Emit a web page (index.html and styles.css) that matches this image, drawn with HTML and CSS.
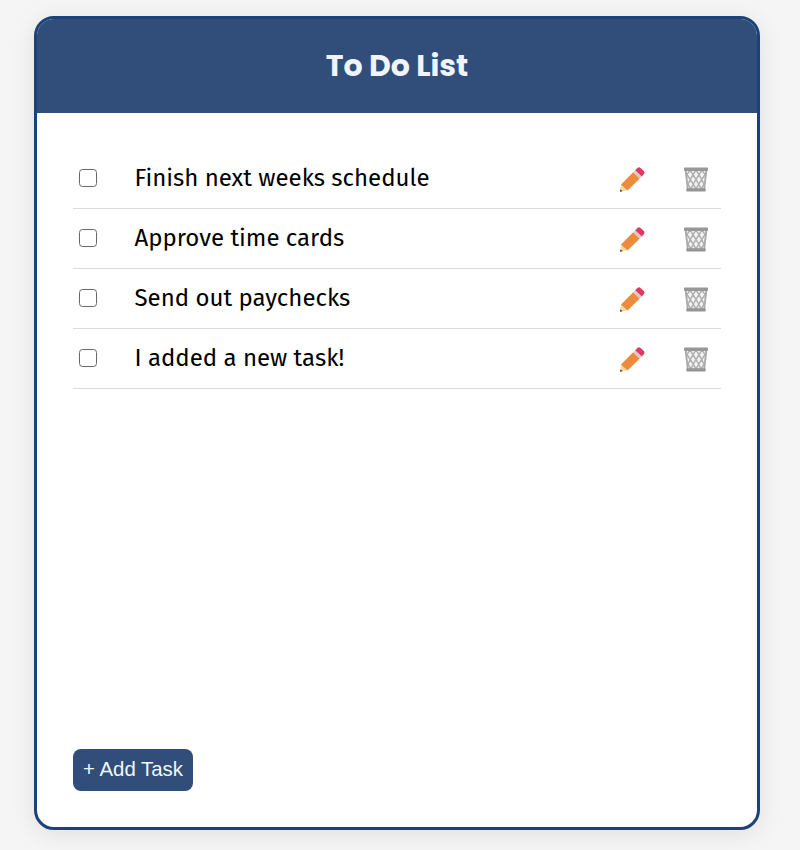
FILE: index.html
```html
<!DOCTYPE html>
<html lang="en">
<head>
<meta charset="utf-8">
<title>To Do List</title>
<link rel="stylesheet" href="styles.css">
</head>
<body>
<svg width="0" height="0" class="defs" aria-hidden="true">
  <symbol id="pencil" viewBox="0 0 28 28">
    <path d="M2 26.8 3.3 19.2 9.3 25.2Z" fill="#f8d79b"/>
    <path d="M2 26.8 2.5 24.3 4.5 26.2Z" fill="#39383b"/>
    <path d="M3 19.4 15.2 7.2 21.8 13.4 9.5 25.4Z" fill="#ed8a3c"/>
    <path d="M15.2 7.2 17.2 5.2 23.8 11.4 21.8 13.4Z" fill="#dcc9cf"/>
    <path d="M17.2 5.2 19.6 2.8Q21.1 1.6 22.6 3L25.9 6Q27.2 7.5 26 9L23.8 11.4Z" fill="#de3b64"/>
  </symbol>
  <symbol id="trash" viewBox="0 0 28 28">
    <path d="M3.5 5H24.5L22.2 24H5.8Z" fill="#f4f4f4"/>
    <path d="M3.6 5 5.8 24M24.4 5 22.2 24" stroke="#a9a9a9" stroke-width="1.9" fill="none"/>
    <path d="M8 5 11 9.7 8.3 14.5 11.2 19.2 9 24M8 5 5 9.7 8.3 14.5 6 19.2 9 24M14 5 11 9.7 14 14.5 11.2 19.2 14 24M14 5 17 9.7 14 14.5 16.8 19.2 14 24M20 5 17 9.7 19.7 14.5 16.8 19.2 19 24M20 5 23 9.7 19.7 14.5 22 19.2 19 24" stroke="#b0b0b0" stroke-width="1.5" fill="none"/>
    <rect x="2" y="2.6" width="24" height="3.3" rx=".8" fill="#989898"/>
    <rect x="4.3" y="23.2" width="19.4" height="3.4" rx=".8" fill="#949494"/>
  </symbol>
</svg>
<main class="card">
  <header class="header"><h1>To Do List</h1></header>
  <div class="content">
    <ul class="tasks">
      <li class="task"><span class="check" role="checkbox" aria-checked="false"></span><span class="label">Finish next weeks schedule</span><svg class="icon"><use href="#pencil"/></svg><svg class="icon"><use href="#trash"/></svg></li>
      <li class="task"><span class="check" role="checkbox" aria-checked="false"></span><span class="label">Approve time cards</span><svg class="icon"><use href="#pencil"/></svg><svg class="icon"><use href="#trash"/></svg></li>
      <li class="task"><span class="check" role="checkbox" aria-checked="false"></span><span class="label">Send out paychecks</span><svg class="icon"><use href="#pencil"/></svg><svg class="icon"><use href="#trash"/></svg></li>
      <li class="task"><span class="check" role="checkbox" aria-checked="false"></span><span class="label">I added a new task!</span><svg class="icon"><use href="#pencil"/></svg><svg class="icon"><use href="#trash"/></svg></li>
    </ul>
    <button class="add">+ Add Task</button>
  </div>
</main>
</body>
</html>
```
FILE: styles.css
```css
* { box-sizing: border-box; }
body { margin: 0; height: 850px; padding: 16px 40px 20px 34px; background: #f5f5f5; overflow: hidden; }
.defs { display: none; }
.card { display: flex; flex-direction: column; height: 814px; border: 3px solid #1b4279; border-radius: 20px; background: #fff; box-shadow: 0 4px 24px rgba(0, 0, 0, .09); overflow: hidden; }
.header { flex: none; height: 94px; display: flex; align-items: center; justify-content: center; background: #304e79; }
h1 { margin: 0; font: 700 30px/40px Poppins, Inter, sans-serif; color: #f0f4ff; }
.content { flex: 1; display: flex; flex-direction: column; align-items: stretch; justify-content: space-between; padding: 36px; }
.tasks { list-style: none; margin: 0; padding: 0; }
.task { display: flex; align-items: center; height: 60px; padding: 0 11.5px 2px 6px; border-bottom: 1px solid #dcdcdc; }
.check { width: 18px; height: 18px; border: 1.5px solid #686868; border-radius: 3.5px; margin-right: 37.5px; }
.label { flex: 1; font: 400 24px/32px "Fira Sans", "Noto Sans", sans-serif; color: #000; white-space: nowrap; }
.icon { width: 28px; height: 28px; margin-top: 2px; }
.icon + .icon { margin-left: 36px; }
.add { align-self: flex-start; width: 120px; height: 42px; padding: 0 0 2px; border: 0; border-radius: 8px; background: #304e79; color: #f0f8ff; font: 400 20.4px "Liberation Sans", Arial, sans-serif; white-space: nowrap; }
```
